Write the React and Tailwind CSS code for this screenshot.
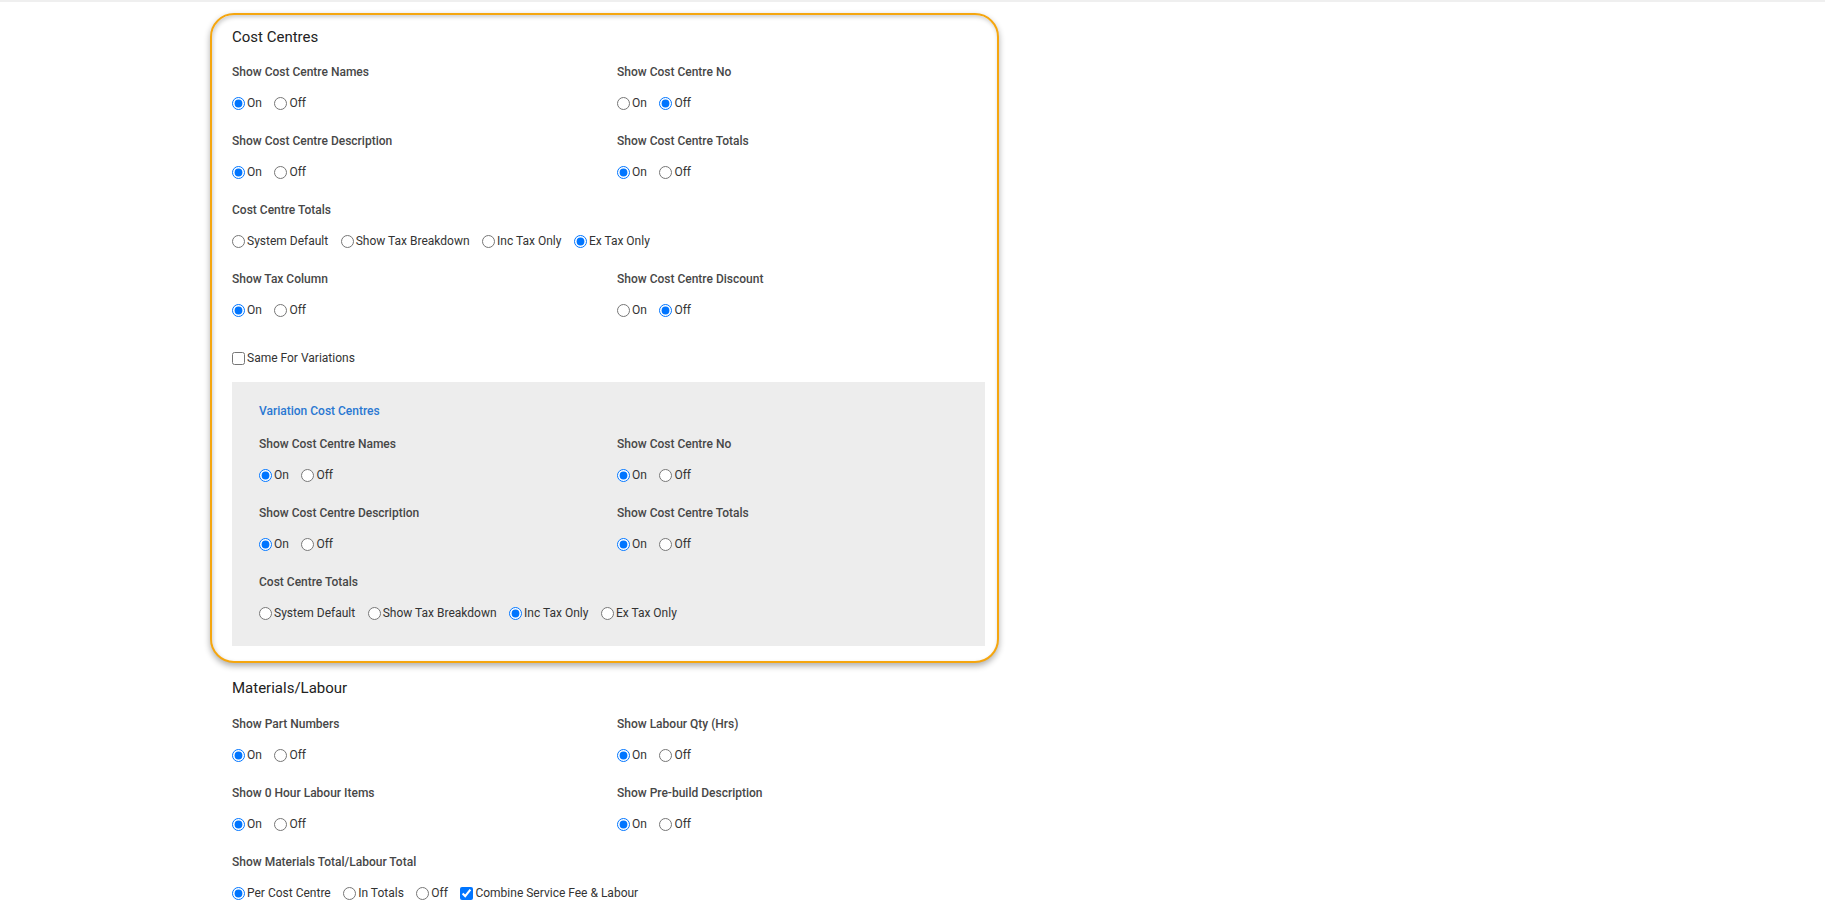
import React from 'react';

const font = { fontFamily: 'Roboto, "Liberation Sans", Arial, sans-serif' };

function Options({ name, options, checked, extra }) {
  return (
    <div className="mt-[11px] flex h-[20px] items-center gap-x-[12.5px] text-[12px] text-[#333]">
      {options.map((opt) => (
        <label key={opt} className="flex items-center gap-x-[2px] cursor-pointer">
          <input type="radio" name={name} defaultChecked={opt === checked} />
          <span>{opt}</span>
        </label>
      ))}
      {extra}
    </div>
  );
}

function Field({ label, name, options = ['On', 'Off'], checked, extra, first }) {
  return (
    <div className={first ? '' : 'mt-[18px]'}>
      <div className="h-[20px] leading-[20px] text-[12px] font-medium text-[#474747]">
        {label}
      </div>
      <Options name={name} options={options} checked={checked} extra={extra} />
    </div>
  );
}

function Pair({ left, right, leftWidth = 'w-[385px]', first }) {
  return (
    <div className={`flex ${first ? '' : 'mt-[18px]'}`}>
      <div className={leftWidth}>
        <Field first {...left} />
      </div>
      <div className="flex-1">
        <Field first {...right} />
      </div>
    </div>
  );
}

const totals = ['System Default', 'Show Tax Breakdown', 'Inc Tax Only', 'Ex Tax Only'];

export default function App() {
  return (
    <div className="min-h-screen bg-white pb-10" style={font}>
      <div className="h-[2px] bg-[#efefef]" />

      <div className="ml-[210px] mt-[11px] w-[789px] rounded-[24px] border-2 border-[#f5a60f] bg-white pl-[20px] pr-[12px] pt-[10px] pb-[15px] shadow-[0_3px_6px_rgba(0,0,0,0.32),inset_1px_2px_4px_rgba(0,0,0,0.2)]">
        <h2 className="h-[24px] leading-[24px] text-[15px] text-[#222]">Cost Centres</h2>
        <div className="mt-[13px]">
          <Pair
            first
            left={{ label: 'Show Cost Centre Names', name: 'ccNames', checked: 'On' }}
            right={{ label: 'Show Cost Centre No', name: 'ccNo', checked: 'Off' }}
          />
          <Pair
            left={{ label: 'Show Cost Centre Description', name: 'ccDesc', checked: 'On' }}
            right={{ label: 'Show Cost Centre Totals', name: 'ccTotals', checked: 'On' }}
          />
          <Field label="Cost Centre Totals" name="ccTotalsMode" options={totals} checked="Ex Tax Only" />
          <Pair
            left={{ label: 'Show Tax Column', name: 'taxCol', checked: 'On' }}
            right={{ label: 'Show Cost Centre Discount', name: 'ccDiscount', checked: 'Off' }}
          />
        </div>

        <label className="mt-[28px] flex h-[20px] items-center gap-x-[2px] text-[12px] text-[#333]">
          <input type="checkbox" />
          <span>Same For Variations</span>
        </label>

        <div className="mt-[14px] w-[753px] bg-[#ededed] pl-[27px] pt-[19px] pb-[23px]">
          <div className="h-[20px] leading-[20px] text-[12px] font-medium text-[#2a78d2]">
            Variation Cost Centres
          </div>
          <div className="mt-[13px]">
            <Pair
              first
              leftWidth="w-[358px]"
              left={{ label: 'Show Cost Centre Names', name: 'vNames', checked: 'On' }}
              right={{ label: 'Show Cost Centre No', name: 'vNo', checked: 'On' }}
            />
            <Pair
              leftWidth="w-[358px]"
              left={{ label: 'Show Cost Centre Description', name: 'vDesc', checked: 'On' }}
              right={{ label: 'Show Cost Centre Totals', name: 'vTotals', checked: 'On' }}
            />
            <Field label="Cost Centre Totals" name="vTotalsMode" options={totals} checked="Inc Tax Only" />
          </div>
        </div>
      </div>

      <div className="ml-[232px] mt-[13px]">
        <h2 className="h-[24px] leading-[24px] text-[15px] text-[#222]">Materials/Labour</h2>
        <div className="mt-[14px]">
          <Pair
            first
            left={{ label: 'Show Part Numbers', name: 'partNo', checked: 'On' }}
            right={{ label: 'Show Labour Qty (Hrs)', name: 'labourQty', checked: 'On' }}
          />
          <Pair
            left={{ label: 'Show 0 Hour Labour Items', name: 'zeroHour', checked: 'On' }}
            right={{ label: 'Show Pre-build Description', name: 'prebuild', checked: 'On' }}
          />
          <Field
            label="Show Materials Total/Labour Total"
            name="matTotal"
            options={['Per Cost Centre', 'In Totals', 'Off']}
            checked="Per Cost Centre"
            extra={
              <label className="flex items-center gap-x-[2px] cursor-pointer">
                <input type="checkbox" defaultChecked />
                <span>Combine Service Fee &amp; Labour</span>
              </label>
            }
          />
        </div>
      </div>
    </div>
  );
}
